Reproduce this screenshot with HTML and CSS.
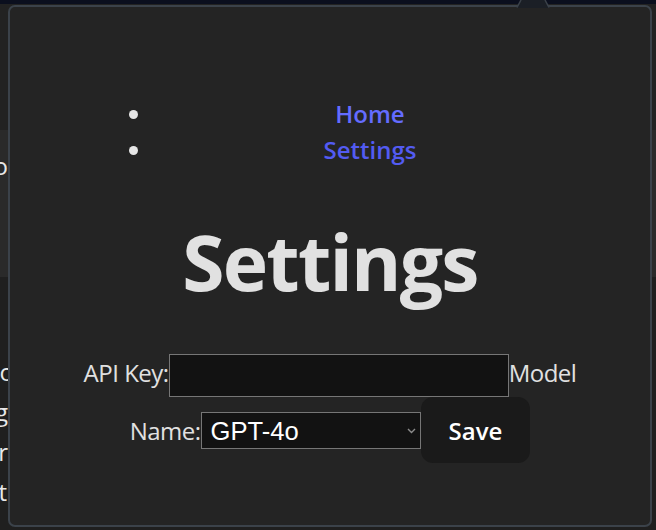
FILE: index.html
```html
<!DOCTYPE html>
<html lang="en">
<head>
<meta charset="utf-8">
<title>Settings</title>
<link rel="stylesheet" href="styles.css">
</head>
<body>
<div class="page">
  <div class="topbar"></div>
  <div class="bg bg-a"></div>
  <div class="bg bg-b">
    <div class="frag frag-o"><span>Go</span></div>
  </div>
  <div class="bg bg-c">
    <div class="frag frag-lo"><span>Hello</span></div>
    <div class="frag frag-g"><span>Log</span></div>
    <div class="frag frag-r"><span>Other</span></div>
    <div class="frag frag-t"><span>Text</span></div>
  </div>
</div>
<div class="popup">
  <svg class="notch" width="36" height="8" viewBox="0 0 36 8" aria-hidden="true">
    <polygon points="2,8 6,0 30,0 34,8" fill="#1b1f26"/>
    <line x1="2" y1="7.5" x2="6" y2="0" stroke="#3b424a" stroke-width="1.5"/>
    <line x1="30" y1="0" x2="34" y2="7.5" stroke="#3b424a" stroke-width="1.5"/>
  </svg>
  <div class="app">
    <nav>
      <ul class="nav">
        <li><a class="link" href="#">Home</a></li>
        <li><a class="link active" href="#">Settings</a></li>
      </ul>
    </nav>
    <h1 class="title">Settings</h1>
    <form class="form"><label class="label" for="key">API Key:</label><input id="key" class="field-input" type="text"><label class="label" for="model">Model Name:</label><span class="select-wrap"><select id="model" class="field-select"><option>GPT-4o</option></select><svg class="chev" width="9" height="6" viewBox="0 0 9 6" aria-hidden="true"><polyline points="1,1 4.5,4.5 8,1" fill="none" stroke="#8c8c8c" stroke-width="1.4"/></svg></span><button class="save" type="button">Save</button></form>
  </div>
</div>
</body>
</html>
```

FILE: styles.css
```css
html, body {
  margin: 0;
  padding: 0;
}

body {
  width: 656px;
  height: 530px;
  overflow: hidden;
  background: #1f1f1f;
  font-family: "Open Sans", "Noto Sans", sans-serif;
  position: relative;
}

.page {
  height: 530px;
  display: flex;
  flex-direction: column;
}

.topbar {
  height: 4px;
  background: #0b0f1e;
}

.bg-a {
  height: 126px;
  background: #222222;
}

.bg-b {
  height: 147px;
  box-sizing: border-box;
  padding-top: 16px;
  background: #2a2a2a;
}

.bg-c {
  flex: 1;
  padding-top: 75px;
  background: #1f1f1f;
}

.frag {
  display: flex;
  justify-content: flex-end;
  overflow: hidden;
  white-space: nowrap;
  font-size: 24px;
  line-height: 40px;
  color: #e8e8e8;
}

.frag-o { width: 8px; }
.frag-lo { width: 14px; }
.frag-g { width: 8px; }
.frag-r { width: 8px; }
.frag-t { width: 7px; }

.popup {
  position: absolute;
  left: 8px;
  top: 5px;
  width: 644px;
  height: 522px;
  box-sizing: border-box;
  border: 2px solid #3b424a;
  border-radius: 7px;
  background: #242424;
  color: rgba(255, 255, 255, 0.87);
}

.notch {
  position: absolute;
  left: 505px;
  top: -7px;
}

.app {
  padding: 0 48px;
  text-align: center;
}

.nav {
  margin: 89px 15px 0 55px;
  padding-left: 40px;
  list-style: disc;
  font-size: 24px;
  line-height: 36px;
  color: #e6e6e6;
}

.link {
  color: #646cff;
  font-weight: 600;
  text-decoration: none;
}

.link.active {
  color: #535bf2;
}

.title {
  margin: 52px 0 50px;
  font-size: 76.8px;
  line-height: 84px;
  font-weight: 700;
  letter-spacing: -1.8px;
  color: #e1e1e1;
}

.form {
  margin: 0;
  font-size: 24px;
  line-height: 36px;
}

.label {
  color: #e1e1e1;
  letter-spacing: -0.5px;
}

.field-input {
  width: 340px;
  height: 43px;
  box-sizing: border-box;
  margin: 0;
  padding: 0 8px;
  border: 1px solid #767676;
  background: #121212;
  color: #fff;
  font: 20px "Liberation Sans", Arial, sans-serif;
  vertical-align: middle;
}

.select-wrap {
  position: relative;
  display: inline-block;
}

.field-select {
  -webkit-appearance: none;
  appearance: none;
  width: 220px;
  height: 37px;
  box-sizing: border-box;
  margin: 0;
  padding: 0 24px 0 9px;
  border: 1px solid #767676;
  border-radius: 0;
  background: #121212;
  color: #ffffff;
  font: 25.6px "Liberation Sans", Arial, sans-serif;
}

.chev {
  position: absolute;
  right: 5px;
  top: 50%;
  margin-top: -3px;
}

.save {
  margin: 0;
  padding: 14.5px 27px;
  border: 1px solid transparent;
  border-radius: 12px;
  background: #1a1a1a;
  color: #ffffff;
  font-family: "Open Sans", "Noto Sans", sans-serif;
  font-size: 24px;
  font-weight: 600;
  line-height: 35px;
}
```
